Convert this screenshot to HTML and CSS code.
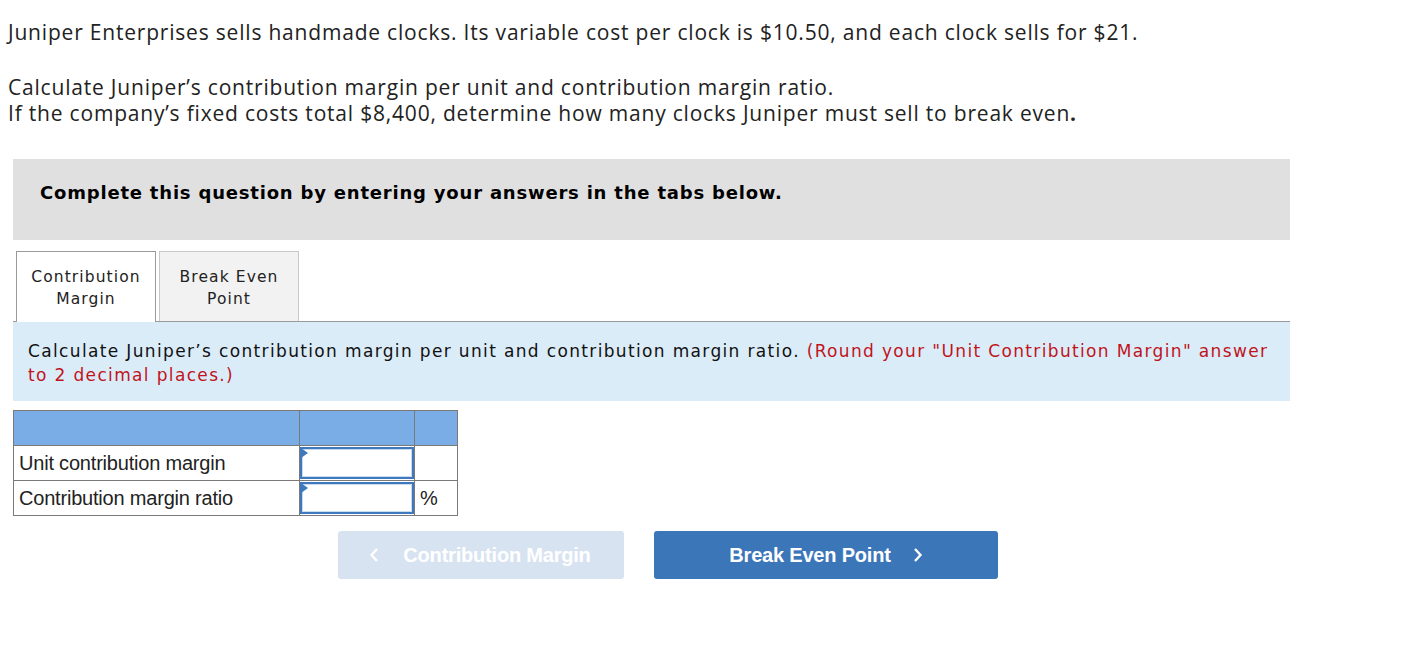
FILE: index.html
```html
<!DOCTYPE html>
<html>
<head>
<meta charset="utf-8">
<link rel="stylesheet" href="styles.css">
</head>
<body>
<div class="page">
  <p class="intro">Juniper Enterprises sells handmade clocks. Its variable cost per clock is $10.50, and each clock sells for $21.</p>
  <p class="intro task">Calculate Juniper’s contribution margin per unit and contribution margin ratio.<br>If the company’s fixed costs total $8,400, determine how many clocks Juniper must sell to break even<b>.</b></p>

  <div class="notice">Complete this question by entering your answers in the tabs below.</div>

  <div class="tabs">
    <div class="tab active">Contribution<br>Margin</div>
    <div class="tab">Break Even<br>Point</div>
  </div>

  <div class="prompt">Calculate Juniper’s contribution margin per unit and contribution margin ratio. <span class="red">(Round your "Unit Contribution Margin" answer to 2 decimal places.)</span></div>

  <table class="grid">
    <tr class="head"><td class="c1"></td><td class="c2"></td><td class="c3"></td></tr>
    <tr><td class="c1">Unit contribution margin</td><td class="c2"><div class="inp"></div></td><td class="c3"></td></tr>
    <tr><td class="c1">Contribution margin ratio</td><td class="c2"><div class="inp"></div></td><td class="c3">%</td></tr>
  </table>

  <div class="nav">
    <div class="btn prev"><svg class="chev left" width="10" height="16" viewBox="0 0 10 16"><path d="M8 2 L2.5 8 L8 14" fill="none" stroke="#fff" stroke-width="2.4"/></svg>Contribution Margin</div>
    <div class="btn next">Break Even Point<svg class="chev right" width="10" height="16" viewBox="0 0 10 16"><path d="M2 2 L7.5 8 L2 14" fill="none" stroke="#fff" stroke-width="2.4"/></svg></div>
  </div>
</div>
</body>
</html>
```
FILE: styles.css
```css
body {
  margin: 0;
  background: #fff;
}
.page {
  padding: 0 0 0 13px;
  width: 1277px;
}
.intro {
  font-family: "Open Sans", "Liberation Sans", sans-serif;
  font-size: 21px;
  letter-spacing: 0.8px;
  line-height: 26px;
  color: #222;
  margin: 0 0 0 -5px;
  padding-top: 19px;
}
.task {
  padding-top: 29px;
}
.notice {
  margin-top: 33px;
  background: #e0e0e0;
  height: 81px;
  box-sizing: border-box;
  padding: 23px 0 0 27px;
  font-family: "DejaVu Sans", Verdana, sans-serif;
  font-weight: bold;
  font-size: 18px;
  letter-spacing: 0.8px;
  color: #000;
}
.tabs {
  display: flex;
  margin-top: 11px;
  padding-left: 3px;
  gap: 3px;
  border-bottom: 1px solid #9a9a9a;
  align-items: flex-end;
}
.tab {
  width: 140px;
  border: 1px solid #c8c8c8;
  border-bottom: none;
  font-family: "DejaVu Sans", Verdana, sans-serif;
  font-size: 15.5px;
  letter-spacing: 1.1px;
  line-height: 22px;
  text-align: center;
  padding-top: 14px;
  box-sizing: border-box;
  height: 70px;
  background: #f2f2f2;
  color: #222;
}
.tab.active {
  background: #fff;
  border-color: #9a9a9a;
  margin-bottom: -1px;
  height: 71px;
}
.prompt {
  background: #dbecf9;
  height: 79px;
  box-sizing: border-box;
  padding: 17px 20px 0 15px;
  font-family: "DejaVu Sans", Verdana, sans-serif;
  font-size: 17px;
  letter-spacing: 1.35px;
  line-height: 24px;
  color: #111;
}
.red {
  color: #c0141c;
}
.grid {
  margin-top: 9px;
  border-collapse: collapse;
  font-family: "Liberation Sans", Arial, sans-serif;
  font-size: 20px;
  letter-spacing: -0.2px;
  color: #222;
}
.grid td {
  border: 1px solid #7a7a7a;
  padding: 0;
  height: 34px;
}
.grid .head td {
  background: #7aade5;
}
.grid .c1 {
  width: 280px;
  padding-left: 5px;
}
.grid .c2 {
  width: 114px;
  padding: 0;
}
.grid .c3 {
  width: 37px;
  padding-left: 5px;
}
.inp {
  position: relative;
  height: 32px;
  border: 2px solid #3f78bd;
  box-sizing: border-box;
  background: #fff;
  box-shadow: inset 0 0 0 1px #c7daf0;
}
.inp::before {
  content: "";
  position: absolute;
  left: -1px;
  top: -1px;
  border-left: 7px solid #3f78bd;
  border-top: 5px solid transparent;
  border-bottom: 5px solid transparent;
}
.nav {
  display: flex;
  gap: 30px;
  margin: 15px 0 0 325px;
}
.btn {
  height: 48px;
  border-radius: 3px;
  display: flex;
  align-items: center;
  justify-content: center;
  font-family: "Liberation Sans", Arial, sans-serif;
  font-weight: bold;
  font-size: 20px;
  letter-spacing: -0.2px;
  color: #fff;
}
.prev {
  width: 286px;
  background: #d8e3f1;
}
.next {
  width: 344px;
  background: #3b76b9;
}
.chev.left {
  margin: 0 24px 0 -2px;
}
.chev.right {
  margin: 0 0 0 22px;
}
```
